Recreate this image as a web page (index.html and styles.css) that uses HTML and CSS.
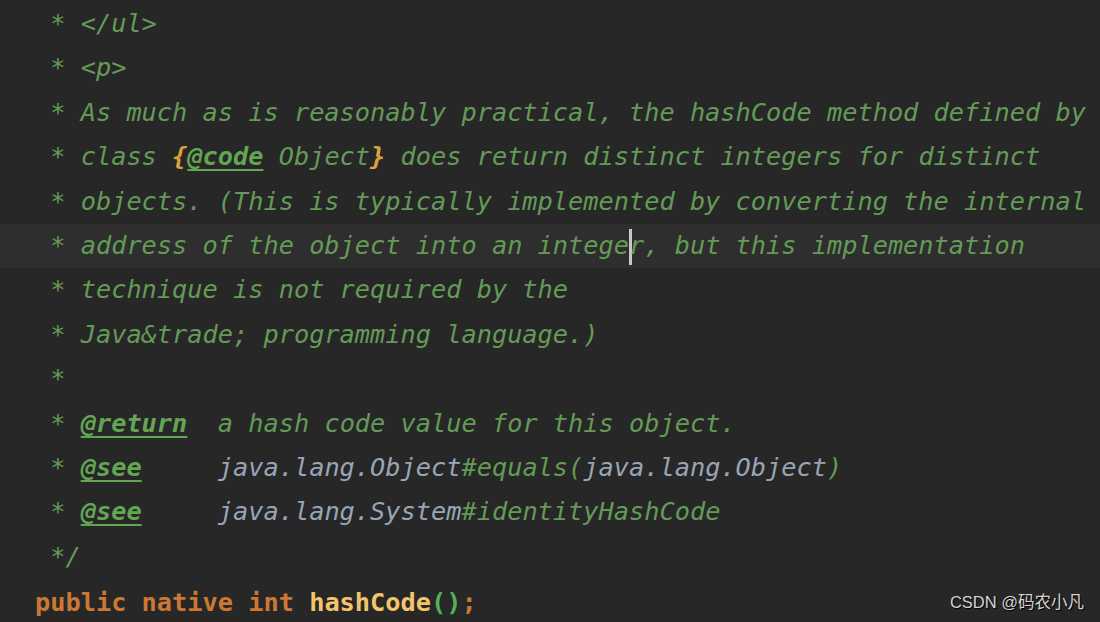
FILE: index.html
```html
<!DOCTYPE html>
<html lang="en">
<head>
<meta charset="utf-8">
<title>hashCode</title>
<link rel="stylesheet" href="styles.css">
</head>
<body>
<div class="editor">
  <div class="line"> <span class="c">* &lt;/ul&gt;</span></div>
  <div class="line"> <span class="c">* &lt;p&gt;</span></div>
  <div class="line"> <span class="c">* As much as is reasonably practical, the hashCode method defined by</span></div>
  <div class="line"> <span class="c">* class <span class="brace">{</span><span class="tag">@code</span> Object<span class="brace">}</span> does return distinct integers for distinct</span></div>
  <div class="line"> <span class="c">* objects. (This is typically implemented by converting the internal</span></div>
  <div class="line current"> <span class="c">* address of the object into an intege<span class="caret"></span>r, but this implementation</span></div>
  <div class="line"> <span class="c">* technique is not required by the</span></div>
  <div class="line"> <span class="c">* Java&amp;trade; programming language.)</span></div>
  <div class="line"> <span class="c">*</span></div>
  <div class="line"> <span class="c">* <span class="tag">@return</span>  a hash code value for this object.</span></div>
  <div class="line"> <span class="c">* <span class="tag">@see</span>     <span class="ref">java.lang.Object</span>#equals(<span class="ref">java.lang.Object</span>)</span></div>
  <div class="line"> <span class="c">* <span class="tag">@see</span>     <span class="ref">java.lang.System</span>#identityHashCode</span></div>
  <div class="line"> <span class="c">*/</span></div>
  <div class="line code"><span class="kw">public native int</span> <span class="fn">hashCode</span><span class="paren">()</span><span class="kw">;</span></div>
  <div class="watermark">CSDN @码农小凡</div>
</div>
</body>
</html>
```

FILE: styles.css
```css
html, body {
  margin: 0;
  padding: 0;
  background: #272727;
  width: 1100px;
  height: 622px;
  overflow: hidden;
}

.editor {
  position: relative;
  width: 1100px;
  height: 622px;
  padding-top: 2px;
  box-sizing: border-box;
  font-family: "DejaVu Sans Mono", "Liberation Mono", monospace;
  font-size: 25.3px;
  color: #629755;
}

.line {
  height: 44.4px;
  line-height: 44.4px;
  padding-left: 35px;
  white-space: pre;
}

.line.current {
  background: #2e2e2e;
}

.c {
  font-style: italic;
  color: #649a57;
}

.tag {
  font-weight: bold;
  font-style: italic;
  text-decoration: underline;
  text-underline-offset: 4px;
  color: #63a552;
}

.brace {
  color: #d9a23c;
  font-weight: bold;
}

.ref {
  color: #97a5b6;
}

.caret {
  display: inline-block;
  width: 3px;
  height: 36px;
  margin-right: -3px;
  vertical-align: middle;
  background: #c8c8c8;
}

.code {
  font-weight: bold;
  margin-top: 2px;
}

.kw {
  color: #cc7832;
}

.fn {
  color: #f4c46a;
}

.paren {
  color: #53b24f;
}

.watermark {
  position: absolute;
  right: 16px;
  bottom: 9px;
  font-family: "Liberation Sans", "Noto Sans CJK SC", sans-serif;
  font-size: 16.5px;
  color: #d4d4d4;
  text-shadow: 1px 1px 1px #000;
  white-space: nowrap;
}
```
